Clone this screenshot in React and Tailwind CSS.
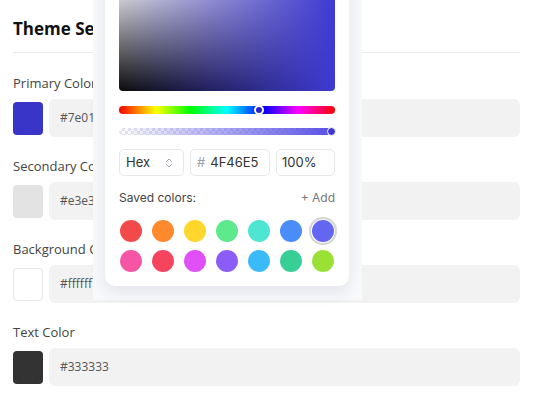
import { ChevronsUpDown } from 'lucide-react'

const rows = [
  { label: 'Primary Color', color: '#3a35c9', value: '#7e01ff' },
  { label: 'Secondary Color', color: '#e3e3e3', value: '#e3e3e3' },
  { label: 'Background Color', color: '#ffffff', value: '#ffffff', border: true },
  { label: 'Text Color', color: '#333333', value: '#333333' },
]

const saved = [
  ['#f24a4a', '#ff8a2e', '#fed62c', '#5eea8c', '#4ee6d3', '#4a8cf8', '#6366f1'],
  ['#f655a5', '#f6445f', '#e14ff7', '#8c5cf6', '#3abaf9', '#38cf97', '#9be135'],
]

function ColorRow({ row }) {
  return (
    <div className="flex flex-col gap-[8px]">
      <div className="text-[13px] leading-[16px] text-[#444]">{row.label}</div>
      <div className="flex items-center gap-[6px]">
        <div
          className={`w-[30px] h-[33px] rounded-[4px] ${row.border ? 'border border-gray-200' : ''}`}
          style={{ background: row.color }}
        />
        <div className="flex-1 h-[38px] rounded-[6px] bg-[#f2f2f2] flex items-center pl-[11px] text-[12px] text-[#555]">
          {row.value}
        </div>
      </div>
    </div>
  )
}

function Picker() {
  return (
    <div className="absolute left-[93px] top-0 w-[269px] h-[300px] bg-[#f8f9fb]">
      <div
        className="absolute left-[12px] top-[-30px] w-[244px] bg-white rounded-[10px] shadow-[0_6px_16px_rgba(30,40,80,0.10)] px-[14px] pt-[14px] pb-[14px]"
        style={{ fontFamily: 'Inter, "Liberation Sans", sans-serif' }}
      >
        <div
          className="h-[107px] rounded-[4px]"
          style={{
            background:
              'linear-gradient(to right, rgba(63,58,210,0) 0%, #3f3ad2 100%), linear-gradient(to bottom, #ececf2 0%, #0c0c0c 100%)',
          }}
        />
        <div className="relative mt-[15px] h-[8px] rounded-full bg-[linear-gradient(to_right,#f00,#ff0_17%,#0f0_33%,#0ff_50%,#00f_67%,#f0f_83%,#f00)]">
          <div className="absolute top-[-1px] left-[135px] w-[10px] h-[10px] rounded-full bg-[#2a20d6] border-[2px] border-white shadow-[0_0_1px_rgba(0,0,0,0.4)]" />
        </div>
        <div className="relative mt-[14px] h-[7px] rounded-full bg-[repeating-conic-gradient(#e6e6ee_0%_25%,#ffffff_0%_50%)] bg-[length:6px_6px]">
          <div className="absolute inset-0 rounded-full bg-[linear-gradient(to_right,rgba(79,70,229,0),rgba(79,70,229,0.95))]" />
          <div className="absolute top-[-1px] right-[-1px] w-[9px] h-[9px] rounded-full bg-[#3f38d6] border-[1.5px] border-white" />
        </div>
        <div className="mt-[14px] flex gap-[6px] h-[27px] text-[13px] text-[#333]">
          <div className="w-[65px] border border-gray-200 rounded-[5px] flex items-center justify-between pl-[6px] pr-[8px]">
            <span>Hex</span>
            <ChevronsUpDown size={12} className="text-gray-400" strokeWidth={2} />
          </div>
          <div className="w-[80px] border border-gray-200 rounded-[5px] flex items-center pl-[6px] gap-[5px]">
            <span className="text-gray-400">#</span>
            <span>4F46E5</span>
          </div>
          <div className="flex-1 border border-gray-200 rounded-[5px] flex items-center pl-[5px]">100%</div>
        </div>
        <div className="mt-[14px] flex justify-between text-[12px] leading-[16px]">
          <span className="text-[#444]">Saved colors:</span>
          <span className="text-[#777]">+ Add</span>
        </div>
        <div className="mt-[14px] flex flex-col gap-[8px]">
          {saved.map((line, i) => (
            <div key={i} className="flex justify-between px-[1px]">
              {line.map((c, j) => (
                <div
                  key={c}
                  className={`w-[22px] h-[22px] rounded-full ${i === 0 && j === 6 ? 'ring-2 ring-offset-1 ring-[#d4d4d4]' : ''}`}
                  style={{ background: c }}
                />
              ))}
            </div>
          ))}
        </div>
      </div>
    </div>
  )
}

export default function App() {
  return (
    <div
      className="relative w-[534px] h-[407px] overflow-hidden bg-white"
      style={{ fontFamily: '"Open Sans", "Noto Sans", sans-serif' }}
    >
      <div className="px-[13px]">
        <div className="pt-[18px] pb-[12px] border-b border-[#ececec] mr-[1px]">
          <h1 className="text-[17px] leading-[22px] font-bold text-[#111]">Theme Settings</h1>
        </div>
        <div className="mt-[22px] flex flex-col gap-[21px] pr-[1px]">
          {rows.map((r) => (
            <ColorRow key={r.label} row={r} />
          ))}
        </div>
      </div>
      <Picker />
    </div>
  )
}
